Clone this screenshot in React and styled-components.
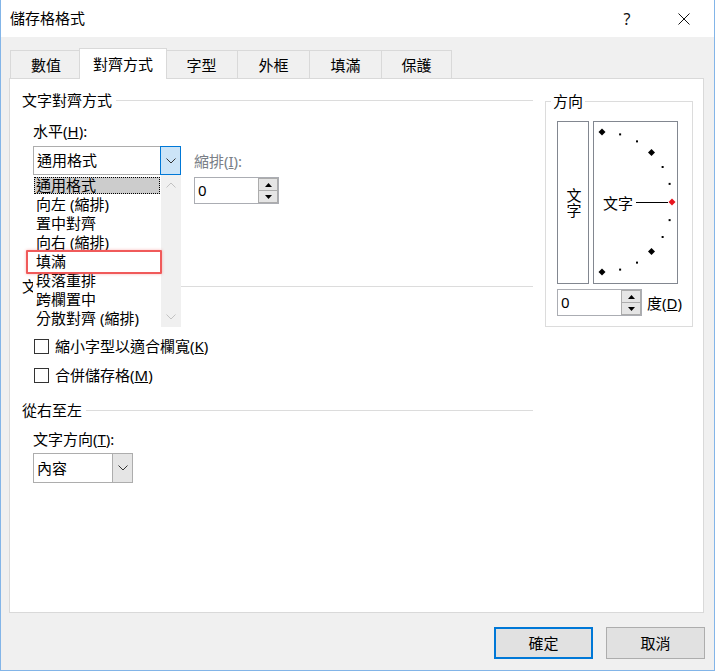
import React from 'react'
import styled, { createGlobalStyle } from 'styled-components'

const GlobalStyle = createGlobalStyle`
  * { box-sizing: border-box; }
  body {
    margin: 0;
    background: #ffffff;
    font-family: "Noto Sans", "Noto Sans CJK TC", sans-serif;
    font-size: 15px;
    color: #000;
  }
`

const Window = styled.div`
  width: 715px;
  height: 671px;
  display: flex;
  flex-direction: column;
  background: #f0f0f0;
  border: 1px solid #83b5e8;
  border-top: none;
`

const TitleBar = styled.div`
  height: 37px;
  flex: none;
  display: flex;
  align-items: center;
  background: #fff;
  padding: 0 7px 0 9px;
`

const Title = styled.div`
  flex: 1;
  line-height: 19px;
`

const CaptionButtons = styled.div`
  display: flex;
  gap: 11px;
`

const CaptionButton = styled.div`
  width: 46px;
  height: 37px;
  display: flex;
  align-items: center;
  justify-content: center;
  font-size: 16px;
  color: #111;
`

const Body = styled.div`
  flex: 1;
  display: flex;
  flex-direction: column;
  padding: 11px 0 0 8px;
`

const TabRow = styled.div`
  display: flex;
  align-items: flex-end;
  height: 30px;
  padding-left: 1px;
  position: relative;
  z-index: 1;
`

const Tab = styled.div`
  width: ${p => p.$w}px;
  height: ${p => (p.$active ? 31 : 28)}px;
  margin: 0 ${p => (p.$active ? -2 : 0)}px ${p => (p.$active ? -1 : 0)}px;
  border: 1px solid #d9d9d9;
  border-bottom: none;
  border-right: ${p => (p.$active || p.$last ? '1px solid #d9d9d9' : 'none')};
  background: ${p => (p.$active ? '#fff' : '#f0f0f0')};
  position: relative;
  z-index: ${p => (p.$active ? 2 : 1)};
  display: flex;
  align-items: center;
  justify-content: center;
  line-height: 19px;
  padding-top: ${p => (p.$active ? 0 : 1)}px;
`

const Panel = styled.div`
  width: 695px;
  height: 535px;
  background: #fff;
  border: 1px solid #d9d9d9;
  display: flex;
  gap: 12px;
  padding: 12px 0 0 12px;
`

const LeftCol = styled.div`
  width: 511px;
  display: flex;
  flex-direction: column;
`

const RightCol = styled.div`
  width: 148px;
`

const SectionHeader = styled.div`
  display: flex;
  align-items: center;
  height: 19px;
  line-height: 19px;
  margin-top: ${p => p.$mt || 0}px;
  &::after {
    content: '';
    flex: 1;
    height: 1px;
    background: #dcdcdc;
    margin-left: 4px;
  }
`

const Indent = styled.div`
  display: flex;
  flex-direction: column;
  align-items: flex-start;
  padding-left: 11px;
`

const FieldLabel = styled.div`
  line-height: 19px;
  height: 19px;
  margin-top: ${p => p.$mt || 0}px;
  color: ${p => (p.$dim ? '#7a7f87' : '#000')};
  white-space: nowrap;
`

const AlignRow = styled.div`
  display: flex;
  align-items: flex-start;
  gap: 13px;
  margin-top: 5px;
`

const ComboWrap = styled.div`
  position: relative;
  width: 148px;
  height: 89px;
`

const ComboBox = styled.div`
  width: ${p => p.$w}px;
  height: ${p => p.$h}px;
  margin-top: ${p => p.$mt || 0}px;
  display: flex;
  border: 1px solid #adadad;
  background: #fff;
`

const ComboText = styled.div`
  flex: 1;
  padding-left: 3px;
  display: flex;
  align-items: center;
  line-height: 19px;
  white-space: nowrap;
`

const ComboButton = styled.div`
  width: 21px;
  margin: -1px -1px -1px 0;
  border: 1px solid ${p => (p.$active ? '#0078d7' : '#adadad')};
  background: ${p => (p.$active ? '#cce4f7' : '#e5e5e5')};
  display: flex;
  align-items: center;
  justify-content: center;
`

const DropList = styled.div`
  position: absolute;
  left: 0;
  top: 29px;
  width: 148px;
  height: 152px;
  background: #fff;
  display: flex;
  z-index: 3;
`

const ListItems = styled.div`
  flex: 1;
  display: flex;
  flex-direction: column;
  padding-top: 1px;
`

const ListItem = styled.div`
  height: 17px;
  margin: 1px 1px;
  line-height: 17px;
  padding-left: 2px;
  white-space: nowrap;
  background: ${p => (p.$selected ? '#cccccc' : 'transparent')};
  outline: ${p => (p.$selected ? '1px dotted #000' : 'none')};
  outline-offset: -1px;
`

const ScrollTrack = styled.div`
  width: 20px;
  background: #f0f0f0;
  display: flex;
  flex-direction: column;
  justify-content: space-between;
  align-items: center;
  padding: 7px 0 7px;
`

const Annotation = styled.div`
  position: absolute;
  left: -7px;
  top: 104px;
  width: 136px;
  height: 24px;
  border: 2px solid #f05a5a;
  border-radius: 1px;
  box-shadow: 0 0 3px rgba(240, 90, 90, 0.45);
  z-index: 4;
`

const IndentCol = styled.div`
  display: flex;
  flex-direction: column;
  padding-top: 6px;
`

const Spinner = styled.div`
  width: ${p => p.$w}px;
  height: 27px;
  margin-top: ${p => p.$mt || 0}px;
  border: 1px solid #abadb3;
  background: #fff;
  display: flex;
`

const SpinValue = styled.div`
  flex: 1;
  padding-left: 3px;
  display: flex;
  align-items: center;
  line-height: 19px;
`

const SpinButtons = styled.div`
  width: 20px;
  display: flex;
  flex-direction: column;
`

const SpinButton = styled.div`
  flex: 1;
  border: 1px solid #acacac;
  background: #e5e5e5;
  display: flex;
  align-items: center;
  justify-content: center;
  & + & {
    border-top: none;
  }
`

const CheckRow = styled.div`
  display: flex;
  align-items: center;
  gap: 6px;
  height: 19px;
  line-height: 19px;
  margin-top: ${p => p.$mt || 0}px;
  white-space: nowrap;
`

const CheckBox = styled.span`
  width: 15px;
  height: 15px;
  margin-left: 1px;
  border: 1px solid #333;
  background: #fff;
`

const GroupBox = styled.div`
  position: relative;
  margin-top: 10px;
  height: 226px;
  border: 1px solid #dcdcdc;
  padding: 19px 0 0 11px;
`

const GroupTitle = styled.div`
  position: absolute;
  top: -10px;
  left: 5px;
  padding: 0 2px;
  background: #fff;
  line-height: 19px;
`

const OrientRow = styled.div`
  display: flex;
  gap: 4px;
`

const VerticalBox = styled.div`
  width: 32px;
  height: 163px;
  border: 1px solid #828790;
  display: flex;
  align-items: center;
  justify-content: center;
  writing-mode: vertical-rl;
  text-orientation: upright;
  line-height: 19px;
`

const DialBox = styled.div`
  width: 85px;
  height: 163px;
  border: 1px solid #828790;
  display: flex;
`

const DegreeRow = styled.div`
  display: flex;
  align-items: center;
  margin-top: 5px;
`

const DegreeLabel = styled.div`
  margin-left: 5px;
  line-height: 19px;
  padding-top: 2px;
`

const Footer = styled.div`
  display: flex;
  justify-content: flex-end;
  gap: 13px;
  margin-top: 14px;
  padding-right: 9px;
`

const DialogButton = styled.div`
  width: 99px;
  height: 32px;
  background: #e1e1e1;
  border: ${p => (p.$default ? '2px solid #0078d7' : '1px solid #adadad')};
  display: flex;
  align-items: center;
  justify-content: center;
  line-height: 19px;
`

const Chevron = ({ up, color = '#333' }) => (
  <svg width="10" height="6" viewBox="0 0 10 6">
    <polyline
      points={up ? '0.5,5.5 5,1 9.5,5.5' : '0.5,0.5 5,5 9.5,0.5'}
      fill="none"
      stroke={color}
      strokeWidth="1"
    />
  </svg>
)

const Triangle = ({ up }) => (
  <svg width="7" height="4" viewBox="0 0 7 4">
    <polygon points={up ? '0,4 3.5,0 7,4' : '0,0 7,0 3.5,4'} fill="#000" />
  </svg>
)

const TICKS = [90, 75, 60, 45, 30, 15, 0, -15, -30, -45, -60, -75, -90]

function Dial() {
  const cx = 8
  const cy = 80
  const r = 70
  return (
    <svg width="83" height="161" viewBox="0 0 83 161">
      <text
        x="9"
        y={cy}
        dominantBaseline="central"
        fontSize="15"
        fontFamily='"Noto Sans CJK TC", sans-serif'
        fill="#000"
      >
        文字
      </text>
      <line x1="42" y1={cy + 0.5} x2="74" y2={cy + 0.5} stroke="#000" strokeWidth="1" />
      {TICKS.map(a => {
        const rad = (a * Math.PI) / 180
        const x = cx + r * Math.cos(rad)
        const y = cy - r * Math.sin(rad)
        if (a % 45 === 0) {
          const d = 3.5
          return (
            <polygon
              key={a}
              points={`${x},${y - d} ${x + d},${y} ${x},${y + d} ${x - d},${y}`}
              fill={a === 0 ? '#e8141e' : '#000'}
            />
          )
        }
        return <rect key={a} x={x - 1} y={y - 1} width="2" height="2" fill="#000" />
      })}
    </svg>
  )
}

function SpinBox({ width, mt }) {
  return (
    <Spinner $w={width} $mt={mt}>
      <SpinValue>0</SpinValue>
      <SpinButtons>
        <SpinButton><Triangle up /></SpinButton>
        <SpinButton><Triangle /></SpinButton>
      </SpinButtons>
    </Spinner>
  )
}

const horizontalOptions = [
  '通用格式',
  '向左 (縮排)',
  '置中對齊',
  '向右 (縮排)',
  '填滿',
  '段落重排',
  '跨欄置中',
  '分散對齊 (縮排)',
]

const tabs = [
  { label: '數值', w: 71 },
  { label: '對齊方式', w: 88, active: true },
  { label: '字型', w: 72 },
  { label: '外框', w: 72 },
  { label: '填滿', w: 72 },
  { label: '保護', w: 71, last: true },
]

export default function App() {
  return (
    <>
      <GlobalStyle />
      <Window>
        <TitleBar>
          <Title>儲存格格式</Title>
          <CaptionButtons>
            <CaptionButton>?</CaptionButton>
            <CaptionButton>
              <svg width="12" height="12" viewBox="0 0 12 12">
                <path d="M0.5 0.5 L11.5 11.5 M11.5 0.5 L0.5 11.5" stroke="#111" strokeWidth="1" />
              </svg>
            </CaptionButton>
          </CaptionButtons>
        </TitleBar>

        <Body>
          <TabRow>
            {tabs.map(t => (
              <Tab key={t.label} $w={t.w} $active={t.active} $last={t.last}>
                {t.label}
              </Tab>
            ))}
          </TabRow>

          <Panel>
            <LeftCol>
              <SectionHeader>文字對齊方式</SectionHeader>
              <Indent>
                <FieldLabel $mt={12}>水平(<u>H</u>):</FieldLabel>
                <AlignRow>
                  <ComboWrap>
                    <ComboBox $w={148} $h={29}>
                      <ComboText>通用格式</ComboText>
                      <ComboButton $active><Chevron /></ComboButton>
                    </ComboBox>

                    <DropList>
                      <ListItems>
                        {horizontalOptions.map((o, i) => (
                          <ListItem key={o} $selected={i === 0}>{o}</ListItem>
                        ))}
                      </ListItems>
                      <ScrollTrack>
                        <Chevron up color="#c2c2c2" />
                        <Chevron color="#c2c2c2" />
                      </ScrollTrack>
                    </DropList>
                    <Annotation />
                  </ComboWrap>

                  <IndentCol>
                    <FieldLabel $dim>縮排(<u>I</u>):</FieldLabel>
                    <SpinBox width={85} mt={6} />
                  </IndentCol>
                </AlignRow>
              </Indent>

              <SectionHeader $mt={42}>文</SectionHeader>
              <Indent>
                <CheckRow $mt={41}>
                  <CheckBox />
                  <span>縮小字型以適合欄寬(<u>K</u>)</span>
                </CheckRow>
                <CheckRow $mt={10}>
                  <CheckBox />
                  <span>合併儲存格(<u>M</u>)</span>
                </CheckRow>
              </Indent>

              <SectionHeader $mt={16}>從右至左</SectionHeader>
              <Indent>
                <FieldLabel $mt={10}>文字方向(<u>T</u>):</FieldLabel>
                <ComboBox $w={100} $h={30} $mt={4}>
                  <ComboText>內容</ComboText>
                  <ComboButton><Chevron /></ComboButton>
                </ComboBox>
              </Indent>
            </LeftCol>

            <RightCol>
              <GroupBox>
                <GroupTitle>方向</GroupTitle>
                <OrientRow>
                  <VerticalBox>文字</VerticalBox>
                  <DialBox><Dial /></DialBox>
                </OrientRow>
                <DegreeRow>
                  <SpinBox width={85} />
                  <DegreeLabel>度(<u>D</u>)</DegreeLabel>
                </DegreeRow>
              </GroupBox>
            </RightCol>
          </Panel>

          <Footer>
            <DialogButton $default>確定</DialogButton>
            <DialogButton>取消</DialogButton>
          </Footer>
        </Body>
      </Window>
    </>
  )
}
